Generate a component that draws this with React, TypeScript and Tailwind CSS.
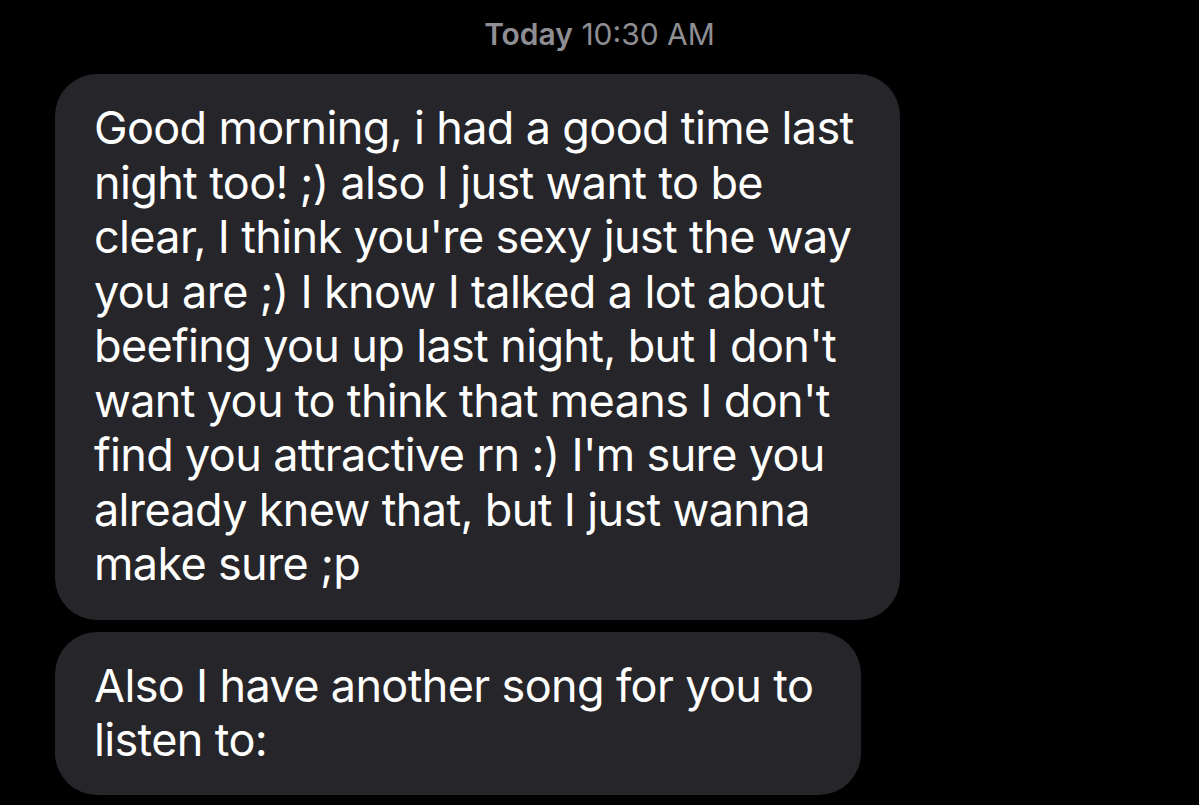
export default function App() {
  const first = [
    "Good morning, i had a good time last",
    "night too! ;) also I just want to be",
    "clear, I think you're sexy just the way",
    "you are ;) I know I talked a lot about",
    "beefing you up last night, but I don't",
    "want you to think that means I don't",
    "find you attractive rn :) I'm sure you",
    "already knew that, but I just wanna",
    "make sure ;p",
  ];
  const second = ["Also I have another song for you to", "listen to:"];

  return (
    <main
      className="w-[1199px] h-[805px] overflow-hidden bg-black text-white"
      style={{ fontFamily: "Inter, 'Noto Sans', sans-serif" }}
    >
      {/* Timestamp */}
      <div className="pt-[16px] h-[74px] text-center text-[30px] leading-[36px] text-[#8e8e93]">
        <span className="font-semibold">Today</span> 10:30 AM
      </div>

      {/* Bubbles */}
      <div className="pl-[55px] flex flex-col gap-[12px]">
        <div className="w-[845px] rounded-[42px] bg-[#262529] pl-[39px] pt-[27px] pb-[28px] text-[45px] leading-[54.5px] tracking-[-0.65px]">
          {first.map((l) => (
            <div key={l} className="whitespace-nowrap">
              {l}
            </div>
          ))}
        </div>
        <div className="w-[806px] rounded-[42px] bg-[#262529] pl-[39px] pt-[27px] pb-[27px] text-[45px] leading-[54.5px] tracking-[-0.65px]">
          {second.map((l) => (
            <div key={l} className="whitespace-nowrap">
              {l}
            </div>
          ))}
        </div>
      </div>
    </main>
  );
}
